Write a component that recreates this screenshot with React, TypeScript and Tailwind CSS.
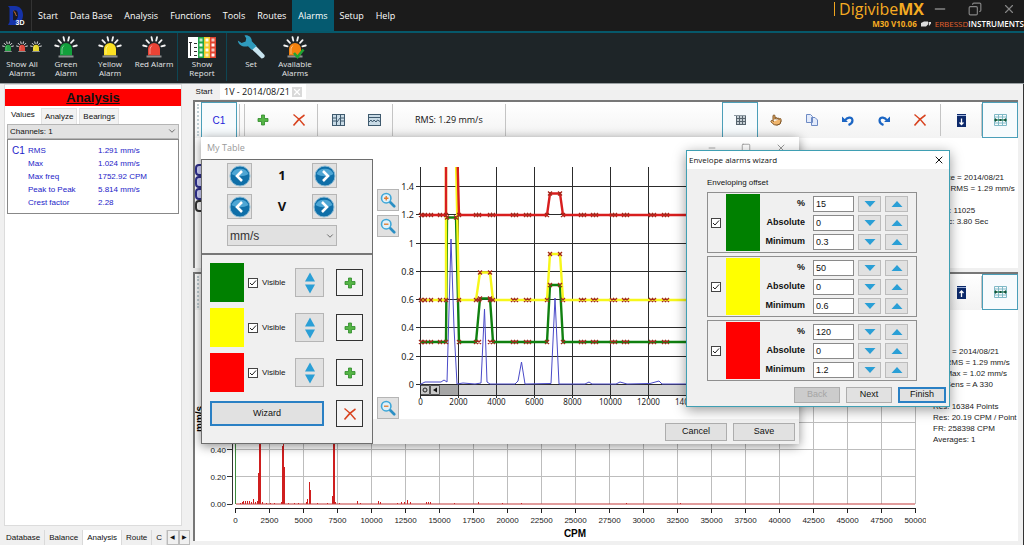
import type React from "react"
import { useState } from "react"
import { ChevronDown, Copy, Minus, Pointer, Square, X } from "lucide-react"
import clsx from "clsx"

const MENU = ["Start", "Data Base", "Analysis", "Functions", "Tools", "Routes", "Alarms", "Setup", "Help"]

const READINGS = [
  { name: "RMS", value: "1.291 mm/s" },
  { name: "Max", value: "1.024 mm/s" },
  { name: "Max freq", value: "1752.92 CPM" },
  { name: "Peak to Peak", value: "5.814 mm/s" },
  { name: "Crest factor", value: "2.28" },
]

const LEVELS = [
  { id: "green", swatch: "bg-[#008000]", percent: "15", absolute: "0", minimum: "0.3" },
  { id: "yellow", swatch: "bg-[#ffff00]", percent: "50", absolute: "0", minimum: "0.6" },
  { id: "red", swatch: "bg-[#ff0000]", percent: "120", absolute: "0", minimum: "1.2" },
]

/* ---------- icons ---------- */

function Lamp({ color, className, check }: { color: string; className?: string; check?: boolean }) {
  return (
    <svg viewBox="0 0 24 23" className={clsx("shrink-0", className)} aria-hidden="true">
      <g stroke="#f4f4f4" strokeWidth="1.8" strokeLinecap="round">
        <path d="M9.5 1.2l.8 3.4M15 1.2l-.8 3.4M4.4 4.2l2.6 2.6M19.6 4.2L17 6.8M1.2 9.5l3.4.8M22.8 9.5l-3.4.8" />
      </g>
      <path d="M6 19.5V13a6 6 0 0 1 12 0v6.500z" fill={color} />
      <path d="M8 18v-5a3.6 3.6 0 0 1 2.200-3.300" stroke="#fff" strokeOpacity=".45" fill="none" />
      <rect x="4.5" y="19.5" width="15" height="2" fill="#8c8f90" />
      {check && <path d="M11 17l3.500 4 6-7.500" fill="none" stroke="#1fa334" strokeWidth="2.6" />}
    </svg>
  )
}

function ReportIcon() {
  const cols = ["#1fa64a", "#f5c928", "#e2432f"]
  return (
    <svg viewBox="0 0 28 21" className="h-[21px] w-7" aria-hidden="true">
      <rect width="28" height="21" fill="#fff" />
      <path d="M1 5.500h3M2.500 5v14M6 6.500h3M6 10.500h3M6 14.500h3M6 18.500h3" stroke="#333" />
      {cols.map((c, i) => (
        <g key={c}>
          <rect x={10 + i * 6} y="0" width="6" height="21" fill={c} />
          {[0, 1, 2, 3].map((r) => (
            <rect key={r} x={11.5 + i * 6} y={1.5 + r * 5} width="3" height="3" fill="#fff" opacity={(i + r) % 2 ? 0.95 : 0.7} />
          ))}
        </g>
      ))}
    </svg>
  )
}

function WrenchIcon() {
  return (
    <svg viewBox="0 0 28 24" className="h-6 w-7" aria-hidden="true">
      <path d="M13.500 13l4-3.500 10 10.500c.8 2-1 3.500-3 3.500z" fill="#c8e4ef" />
      <path
        d="M7.500.5c4-.8 7.500 2 7.300 5.800L19.500 11l-4.500 4-4-3.800C6.500 12.500 1.500 10.500 .8 5.500l3.800 2.500 4-1.600.6-3.200z"
        fill="#2f9bbd"
      />
    </svg>
  )
}

function AppLogo() {
  return (
    <svg viewBox="0 0 18 21" className="h-[21px] w-[18px]" aria-hidden="true">
      <path d="M1 1h7c5 0 8 4 8 9s-3 10-8 10H1l1.500-3V3z" fill="#1532a8" />
      <path d="M6 6c3-2 5 0 5 4s-2 6-5 5z" fill="#1a1a24" />
      <path d="M6.500 6c2 1 1.500 3 3 5" stroke="#d9762c" fill="none" />
      <text x="8.5" y="19.5" fontSize="7" fontWeight="bold" fill="#fff" fontFamily="Liberation Sans, sans-serif">
        3D
      </text>
    </svg>
  )
}

function Plus() {
  return (
    <svg viewBox="0 0 12 12" className="size-3" aria-hidden="true">
      <path d="M4.500 1h3v3.500H11v3H7.500V11h-3V7.500H1v-3h3.500z" fill="#55b545" stroke="#2f8a2a" strokeWidth=".8" />
    </svg>
  )
}

function Cross() {
  return (
    <svg viewBox="0 0 14 14" className="size-3.5" aria-hidden="true">
      <path d="M1.500 1.500C5 4 9 8 12.500 12.500M12.500 2C8.500 4.500 4.500 8.500 1.500 12.500" stroke="#d8431f" strokeWidth="1.5" fill="none" />
    </svg>
  )
}

function TurnArrow({ redo }: { redo?: boolean }) {
  return (
    <svg viewBox="0 0 12 11" className={clsx("h-[11px] w-3", redo && "-scale-x-100")} aria-hidden="true">
      <path d="M0 1.500V7h6L4 5.200z" fill="#1c66c4" />
      <path d="M3 5.500C5 2 9.500 1.500 10.300 4.500c.6 2.500-1.300 4.500-3.800 5.500" fill="none" stroke="#1c66c4" strokeWidth="2.2" />
    </svg>
  )
}

function GridIcon() {
  return (
    <svg viewBox="0 0 12 12" className="size-3" aria-hidden="true">
      <path d="M2 2h10v9H2z" fill="#c4ced4" />
      <path d="M0 1.500h12" stroke="#8b98a1" />
      <path d="M2 4.500h10M2 7.500h10M2 10.500h10M2.500 2v9M5.500 2v9M8.500 2v9M11.500 2v9" stroke="#56646e" />
    </svg>
  )
}

function WaveIcon({ split }: { split?: boolean }) {
  return (
    <svg viewBox="0 0 13 12" className="h-3 w-[13px]" aria-hidden="true">
      <rect x=".5" y=".5" width="12" height="11" fill="#c9dbe6" stroke="#3f5a6e" />
      {split ? (
        <path d="M4.500 0v12M8.500 0v12M1 4h3M1 7h3M9 4h3M5 8l3-4M9 7h3" stroke="#3f5a6e" />
      ) : (
        <path d="M1 3.500h11M1 8l2-2 1.500 2L6 6l2 2 1.500-2L12 7.500" stroke="#3f5a6e" fill="none" />
      )}
    </svg>
  )
}

function BoxArrow({ up }: { up?: boolean }) {
  return (
    <svg viewBox="0 0 9 13" className="h-[13px] w-[9px]" aria-hidden="true">
      <rect width="9" height="13" fill="#0d2a6b" />
      <path d="M0 1.500h9" stroke="#9fb4dd" />
      <path d={up ? "M4.500 11V5M2.500 7l2-2 2 2" : "M4.500 4.500v6M2.500 8.500l2 2 2-2"} stroke="#fff" strokeWidth="1.3" fill="none" />
    </svg>
  )
}

function FitIcon() {
  return (
    <svg viewBox="0 0 13 12" className="h-3 w-[13px]" aria-hidden="true">
      <path d="M.5.500h12v11H.5zM.5 3h12M.5 9h12M4.500 0v12M8.500 0v12" fill="none" stroke="#7fb9c6" />
      <path d="M0 6h13" stroke="#1d7a4c" strokeWidth="1.2" />
      <path d="M1 4l2.500 2L1 8zM12 4L9.500 6 12 8zM5.500 5h2v2h-2z" fill="#124f3a" />
    </svg>
  )
}

function Triangle({ down }: { down?: boolean }) {
  return (
    <svg viewBox="0 0 12 8" className="h-2 w-3" aria-hidden="true">
      <path d={down ? "M.5 1h11L6 7z" : "M.5 7h11L6 1z"} fill="#2a9fd6" />
    </svg>
  )
}

function Magnifier({ sign }: { sign: "+" | "-" }) {
  return (
    <svg viewBox="0 0 18 18" className="size-4" aria-hidden="true">
      <path d="M11 11l5 5" stroke="#2b8fc4" strokeWidth="3" strokeLinecap="round" />
      <circle cx="7" cy="7" r="5.3" fill="#dff1fa" stroke="#3fa7d8" strokeWidth="1.8" />
      <path d={sign === "+" ? "M4.500 7h5M7 4.500v5" : "M4.500 7h5"} stroke="#e27a2e" strokeWidth="1.5" />
    </svg>
  )
}

function RoundArrow({ next }: { next?: boolean }) {
  return (
    <svg viewBox="0 0 22 22" className="size-[22px]" aria-hidden="true">
      <circle cx="11" cy="11" r="10" fill="#0f6fa8" stroke="#8cbcd6" />
      <path d="M2.500 9a9 8 0 0 1 17 0c-5 3-12 3-17 0z" fill="#4ea6d4" />
      <path d={next ? "M9 6l5 5-5 5" : "M13 6l-5 5 5 5"} fill="none" stroke="#fff" strokeWidth="2.6" />
    </svg>
  )
}

/* ---------- small controls ---------- */

function Tick({ label, hideLabel }: { label: string; hideLabel?: boolean }) {
  const [on, setOn] = useState(true)
  return (
    <label className="flex items-center gap-1 text-[8px]">
      <span className="relative flex size-2.5">
        <input
          type="checkbox"
          aria-label={label}
          checked={on}
          onChange={(e) => setOn(e.target.checked)}
          className="peer size-2.5 appearance-none border border-[#444] bg-white"
        />
        <svg viewBox="0 0 10 10" className="pointer-events-none absolute inset-0 hidden peer-checked:block">
          <path d="M2 5l2 2 4-4.500" fill="none" stroke="#222" />
        </svg>
      </span>
      {!hideLabel && label}
    </label>
  )
}

interface PushButtonProps {
  label: string
  className?: string
  disabled?: boolean
  primary?: boolean
}

function PushButton({ label, className, disabled, primary }: PushButtonProps) {
  return (
    <button
      type="button"
      disabled={disabled}
      className={clsx(
        "flex items-center justify-center text-[9px]",
        primary ? "border-2 border-[#2a80c4]" : "border border-[#adadad]",
        disabled ? "bg-[#cccccc] text-[#a5a5a5]" : "bg-[#e1e1e1]",
        className,
      )}
    >
      {label}
    </button>
  )
}

function IconButton({ label, className, children }: { label: string; className: string; children: React.ReactNode }) {
  return (
    <button type="button" aria-label={label} className={clsx("flex shrink-0 items-center justify-center", className)}>
      {children}
    </button>
  )
}

const TOOL = "h-9 w-9"
const TOOL_ON = "h-9 w-9 border border-[#4b9fb9] bg-[#f7fbfd]"

/* ---------- header ---------- */

function TitleBar() {
  return (
    <header className="flex h-[33px] border-b-2 border-[#06586a] bg-[#1b1b1b] text-white">
      <div className="flex w-8 items-center justify-center border-r border-[#333]">
        <AppLogo />
      </div>
      <nav className="flex font-['Open_Sans',sans-serif] text-[9px]">
        {MENU.map((item) => (
          <a
            key={item}
            href="#"
            className={clsx("flex items-center px-[6px]", item === "Alarms" && "bg-[#055a70]")}
          >
            {item}
          </a>
        ))}
      </nav>
      <div className="ml-auto flex flex-col font-['Open_Sans',sans-serif]">
        <div className="flex h-[18px] items-center justify-end">
          <span className="mr-1 h-3.5 border-l border-[#f0a51e]" />
          <span className="text-[16px] leading-4 text-[#f5ab22]">
            Digivibe<b>MX</b>
          </span>
          <div className="ml-2 flex items-center gap-5 pr-2 text-[#858585]">
            <button type="button" aria-label="Minimize">
              <Minus className="size-4" strokeWidth={2} />
            </button>
            <button type="button" aria-label="Restore">
              <Copy className="size-3.5 -scale-x-100" strokeWidth={2} />
            </button>
            <button type="button" aria-label="Close">
              <X className="size-3.5" strokeWidth={2} />
            </button>
          </div>
        </div>
        <div className="flex items-center justify-end gap-1 pt-px text-[8px] leading-[10px]">
          <b className="text-[#f5ab22]">M30 V10.06</b>
          <svg viewBox="0 0 10 6" className="h-1.5 w-2.5" aria-hidden="true">
            <path d="M0 2l3-1.500h4v3L5 5.500H0zM7.500 1H10v1.500L8 5" fill="#ddd" />
          </svg>
          <span className="text-[#e0602c]">
            ERBESSD<span className="font-semibold text-white">INSTRUMENTS</span>
          </span>
        </div>
      </div>
    </header>
  )
}

function RibbonButton({ icon, label }: { icon: React.ReactNode; label: string }) {
  return (
    <button type="button" className="flex w-11 flex-col items-center px-0.5 pt-0.5">
      <span className="flex h-6 items-center justify-center">{icon}</span>
      <span className="text-[8px] leading-[9px]">{label}</span>
    </button>
  )
}

function Ribbon() {
  return (
    <div className="flex h-[51px] items-start border-b border-[#9aa0a2] bg-[#1e2528] font-['Open_Sans',sans-serif] text-[#e4e6e7]">
      <RibbonButton
        label="Show All Alarms"
        icon={
          <span className="flex gap-0.5">
            <Lamp color="#25a244" className="size-3" />
            <Lamp color="#e0483c" className="size-3" />
            <Lamp color="#e6d62c" className="size-3" />
          </span>
        }
      />
      <RibbonButton label="Green Alarm" icon={<Lamp color="#12a03c" className="h-[23px] w-6" />} />
      <RibbonButton label="Yellow Alarm" icon={<Lamp color="#fbe122" className="h-[23px] w-6" />} />
      <RibbonButton label="Red Alarm" icon={<Lamp color="#ea4335" className="h-[23px] w-6" />} />
      <div className="mr-0.5 ml-px h-12 w-px bg-[#0e4654]" />
      <RibbonButton label="Show Report" icon={<ReportIcon />} />
      <div className="mx-0.5 h-12 w-px bg-[#0e4654]" />
      <RibbonButton label="Set" icon={<WrenchIcon />} />
      <RibbonButton label="Available Alarms" icon={<Lamp color="#f5820d" className="h-[23px] w-6" check />} />
    </div>
  )
}

/* ---------- left panel ---------- */

function AnalysisPanel() {
  return (
    <aside className="flex w-[190px] shrink-0 flex-col">
      <div className="mr-2 mb-1 ml-1 flex flex-1 flex-col border border-[#dcdcdc] bg-white pt-1 pb-1">
        <h2 className="bg-[#ff0000] text-center text-[13px] leading-[17px] font-bold underline">Analysis</h2>
        <div className="flex items-end gap-0.5 px-0.5 text-[8px]">
          <button type="button" className="h-[18px] px-1">Values</button>
          <button type="button" className="h-4 border border-b-0 border-[#e2e2e2] bg-[#f2f2f2] px-[3px]">Analyze</button>
          <button type="button" className="h-4 border border-b-0 border-[#e2e2e2] bg-[#f2f2f2] px-[3px]">Bearings</button>
        </div>
        <div className="relative mx-0.5 flex">
          <select
            aria-label="Channels"
            className="h-[15px] w-full appearance-none border border-[#b5b5b5] bg-[#e2e2e2] px-0.5 text-[8px] leading-[13px]"
          >
            <option>Channels: 1</option>
          </select>
          <ChevronDown className="pointer-events-none absolute top-0.5 right-0.5 size-2.5 text-[#555]" />
        </div>
        <table className="mx-0.5 border-separate border-spacing-0 border border-[#888] pt-1 pb-1 text-left text-[8px] leading-[13px] text-[#2323c8]">
          <tbody>
            {READINGS.map((r, i) => (
              <tr key={r.name}>
                <td className="w-5 pl-1 text-[10px]">{i === 0 && "C1"}</td>
                <th className="w-[70px] font-normal">{r.name}</th>
                <td>{r.value}</td>
              </tr>
            ))}
          </tbody>
        </table>
      </div>
      <div className="flex h-[15px] items-stretch pl-0.5 text-[8px]">
        {["Database", "Balance", "Analysis", "Route", "C"].map((t) => (
          <button key={t} type="button" className={clsx("border-r border-[#dadada] px-1", t === "Analysis" && "bg-white")}>
            {t}
          </button>
        ))}
        <button type="button" aria-label="Scroll left" className="w-3 border border-[#bbb] text-[6px]">◀</button>
        <button type="button" aria-label="Scroll right" className="w-3 border border-[#bbb] text-[6px]">▶</button>
      </div>
    </aside>
  )
}

/* ---------- measurement area ---------- */

function Separator() {
  return <div className="h-8 w-px shrink-0 bg-[#c4c4c4]" />
}

function MainToolbar() {
  return (
    <div className="flex h-9 items-center bg-linear-to-b from-white to-[#f3f3f3] pl-0.5">
      <div className="mr-0.5 h-8 border-l-2 border-dotted border-[#bfcdd2]" />
      <button type="button" className={clsx(TOOL_ON, "text-[10px] text-[#2323d8]")}>C1</button>
      <div className="ml-0.5 flex gap-1">
        <Separator />
        <Separator />
      </div>
      <IconButton label="Add" className={TOOL}><Plus /></IconButton>
      <IconButton label="Remove" className={TOOL}><Cross /></IconButton>
      <Separator />
      <IconButton label="Split view" className={clsx(TOOL, "ml-0.5")}><WaveIcon split /></IconButton>
      <IconButton label="Wave view" className={TOOL}><WaveIcon /></IconButton>
      <Separator />
      <span className="px-[22px] font-['Open_Sans',sans-serif] text-[9px] whitespace-nowrap">RMS: 1.29 mm/s</span>
      <Separator />
      <div className="ml-auto flex items-center">
        <IconButton label="Grid" className={TOOL_ON}><GridIcon /></IconButton>
        <IconButton label="Point" className={TOOL}><Pointer className="size-3 fill-[#f0b56c] text-[#7d5426]" /></IconButton>
        <IconButton label="Copy" className={TOOL}>
          <svg viewBox="0 0 12 12" className="size-3" aria-hidden="true">
            <path d="M.5.500h4l2 2v6h-6zM5.500 3.500h3.500l2.500 2.500v5.500h-6z" fill="#e3ebfb" stroke="#6e8bc4" />
          </svg>
        </IconButton>
        <IconButton label="Undo" className={TOOL}><TurnArrow /></IconButton>
        <IconButton label="Redo" className={TOOL}><TurnArrow redo /></IconButton>
        <IconButton label="Delete" className={TOOL}><Cross /></IconButton>
        <div className="ml-0.5 flex items-center">
          <Separator />
          <IconButton label="Dock down" className="h-9 w-10"><BoxArrow /></IconButton>
          <Separator />
        </div>
        <IconButton label="Fit" className={TOOL_ON}><FitIcon /></IconButton>
      </div>
    </div>
  )
}

const BIG_TICKS = Array.from({ length: 21 }, (_, i) => i)

// x position and height of every line in the spectrum
const LINES = [
  [240, 1], [242, 2], [243, 3], [245, 3], [247, 3], [249, 3], [251, 2], [253, 5], [255, 2], [257, 3],
  [258, 31], [259, 190], [260, 190], [262, 2], [266, 1], [270, 1], [274, 1], [281, 2], [282, 58], [283, 190], [284, 37],
  [288, 1], [294, 1], [298, 1], [306, 2], [307, 5], [309, 22], [310, 14], [317, 1], [327, 1],
  [332, 8], [333, 190], [334, 190], [335, 2], [339, 1], [357, 3], [360, 1], [378, 3], [380, 2], [397, 1], [401, 2],
  [404, 2], [407, 4], [410, 2], [426, 2], [428, 2], [430, 2], [454, 1], [478, 2], [502, 1], [521, 1],
  [626, 1], [680, 1],
]
const SPECTRUM = LINES.map(([x, h]) => `M${x + 0.5} 504v-${h}`).join("")

function SpectrumChart() {
  return (
    <svg viewBox="195 310 731 231" className="h-auto min-w-0 flex-1" fontFamily="Liberation Sans, sans-serif" fontSize="8" aria-hidden="true">
      <g stroke="#bdbdbd">
        {BIG_TICKS.map((i) => (
          <path key={i} d={`M${235.5 + i * 34} 312V504`} />
        ))}
        {[340.5, 367.5, 395.5, 422.5, 449.5, 476.5].map((y) => (
          <path key={y} d={`M236 ${y}H915`} />
        ))}
      </g>
      <path d="M235.500 312V504" stroke="#3c8a3c" />
      <path d="M232.500 312V504.500M227 504.500h5M227 476.500h5M227 449.500h5" stroke="#333" fill="none" />
      <path d={SPECTRUM} stroke="#cf1f1f" fill="none" />
      <path d="M236 504H915" stroke="#c23a3a" />
      <path d="M235 508.500H915" stroke="#222" />
      {BIG_TICKS.map((i) => (
        <g key={i}>
          <path d={`M${235.5 + i * 34} 508v5`} stroke="#222" />
          <text x={235.5 + i * 34} y="523" textAnchor="middle" fill="#222">{i * 2500}</text>
        </g>
      ))}
      {["0.00", "0.20", "0.40"].map((v, i) => (
        <text key={v} x="226" y={507 - i * 27} textAnchor="end" fill="#222">{v}</text>
      ))}
      <text x="575" y="537" textAnchor="middle" fontWeight="bold" fontSize="10">CPM</text>
      <text transform="translate(203 432) rotate(-90)" fontWeight="bold" fontSize="10">mm/s</text>
    </svg>
  )
}

function Workspace() {
  return (
    <main className="flex min-w-0 flex-1 flex-col pb-1">
      <div className="flex h-[15px] items-end pl-0.5 text-[9px]">
        <button type="button" className="h-3.5 w-6 text-[8px]">Start</button>
        <div className="ml-1 flex h-[15px] items-center gap-0.5 bg-white px-1">
          <button type="button" className="font-['Open_Sans',sans-serif]">1V - 2014/08/21</button>
          <button type="button" aria-label="Close tab" className="bg-[#d9d9d9] text-white">
            <X className="size-2.5" strokeWidth={3} />
          </button>
        </div>
      </div>
      <section className="mt-px mr-[5px] ml-[3px] h-[168px] border-t-2 border-l-2 border-[#777] bg-white">
        <MainToolbar />
        <div className="flex justify-between pt-[26px]">
          <div className="flex w-3 flex-col">
            {["A", "B", "C", "D"].map((c) => (
              <button
                key={c}
                type="button"
                aria-label={`Cursor ${c}`}
                className="h-3 w-3 rounded border-2 border-[#2d2d8c] bg-[#d4d6ff] last:border-[#333] last:bg-white"
              />
            ))}
          </div>
          <p className="w-20 pt-2 text-[8px] leading-[11px] whitespace-nowrap text-[#222]">
            Date = 2014/08/21<br />C1 RMS = 1.29 mm/s<br /><br />SR: 11025<br />Rec: 3.80 Sec
          </p>
        </div>
      </section>
      <section className="mt-1 mr-[5px] ml-[3px] flex-1 border-t-2 border-l-2 border-[#777] bg-white">
        <div className="flex h-9 items-center justify-end bg-linear-to-b from-white to-[#f3f3f3]">
          <div className="mr-auto ml-0.5 h-8 border-l-2 border-dotted border-[#bfcdd2]" />
          <Separator />
          <IconButton label="Dock up" className="h-9 w-10"><BoxArrow up /></IconButton>
          <Separator />
          <IconButton label="Fit" className={TOOL_ON}><FitIcon /></IconButton>
        </div>
        <div className="flex items-start">
          <SpectrumChart />
          <p className="w-[92px] shrink-0 pt-9 pl-[7px] text-[8px] leading-[11px] whitespace-nowrap text-[#222]">
            Date = 2014/08/21<br />C1 RMS = 1.29 mm/s<br />C1 Max = 1.02 mm/s<br />C1 Sens = A 330<br /><br />
            Res: 16384 Points<br />Res: 20.19 CPM / Point<br />FR: 258398 CPM<br />Averages: 1
          </p>
        </div>
      </section>
    </main>
  )
}

/* ---------- alarm table window ---------- */

const ENVELOPES = [
  { color: "#108010", base: 342, d: "M420 342H446L447 217.500H456L459 342H476L480 298.500H490L493 342H547L550 285H560L563 342H799" },
  { color: "#f7f71a", base: 300, d: "M420 300H446V160M456 160L459 300H476L480 272.500H490L493 300H547L550 254H560L563 300H799" },
  { color: "#d81e1e", base: 215, d: "M420 215H446V160M457.500 160L459 215H547L550 193.500H560L563 215H799" },
]

const MARKS = [421, 425, 431, 440, 446, 459, 476, 479, 490, 493, 513, 516, 526, 529, 547, 563, 581, 584, 593, 596, 612, 615, 624, 627, 651, 654, 664, 667]
const PEAKS = [
  [447, 217.5], [456, 217.5], [480, 298.5], [490, 298.5], [550, 285], [560, 285],
  [480, 272.5], [490, 272.5], [550, 254], [560, 254], [550, 193.5], [560, 193.5],
]
const SIGNAL =
  "M420 384.500L425 382H441L444 380L447 382L451 239L454 328L457 384L463 383L475 384L481 383L484.500 309L487 382L490 384H515L518 381L521.500 362L525 384L551 383.500L555 298L559 384H585L589 382L592 384H616L620 382L627 384L650 383.500L659 381L662 384H690"

function mark(x: number, y: number) {
  return `M${x - 2} ${y - 2}l4 4M${x + 2} ${y - 2}l-4 4`
}

function EnvelopeChart() {
  return (
    <svg viewBox="399 159 400 260" className="h-auto min-w-0 flex-1" fontFamily="Noto Sans, sans-serif" aria-hidden="true">
      <clipPath id="plot">
        <path d="M416 167H799V396H416z" />
      </clipPath>
      <rect x="420" y="385" width="379" height="10" fill="#d5d5d5" />
      <rect x="420" y="385" width="38" height="10" fill="#a5a5a5" />
      <path d="M420.500 385.500h9v9h-9zM430.500 385.500h9v9h-9z" fill="#c8c8c8" stroke="#555" />
      <circle cx="425" cy="390" r="2" fill="none" stroke="#222" />
      <path d="M433 390l4-2.500v5z" fill="#111" />
      <g stroke="#2c2c2c">
        {[0, 1, 2, 3, 4, 5, 6, 7, 8, 9].map((i) => (
          <path key={i} d={`M${420.5 + i * 38} 167V398`} />
        ))}
        {[0, 1, 2, 3, 4, 5, 6, 7].map((i) => (
          <path key={i} d={`M416 ${Math.round(384 - i * 28.3) + 0.5}H799`} />
        ))}
        <path d="M420 395.500H799" />
      </g>
      <g clipPath="url(#plot)" fill="none">
        <path d={SIGNAL} stroke="#4a4ac8" />
        {ENVELOPES.map((e) => (
          <path key={e.color} d={e.d} stroke={e.color} strokeWidth="2.4" />
        ))}
        <path
          d={ENVELOPES.map((e) => MARKS.map((x) => mark(x, e.base)).join("")).join("") + PEAKS.map(([x, y]) => mark(x, y)).join("")}
          stroke="#a3281c"
          strokeWidth="1.3"
        />
      </g>
      {["0", "0.2", "0.4", "0.6", "0.8", "1", "1.2", "1.4"].map((v, i) => (
        <text key={v} x="414" y={388 - i * 28.3} textAnchor="end" fontSize="9" fill="#222">{v}</text>
      ))}
      {[0, 1, 2, 3, 4, 5, 6, 7, 8, 9].map((i) => (
        <text key={i} x={420.5 + i * 38} y="405" textAnchor="middle" fontSize="8" fill="#222">{i * 2000}</text>
      ))}
    </svg>
  )
}

function Stepper({ value, name }: { value: string; name: string }) {
  return (
    <div className="flex items-center justify-between">
      <IconButton label={`Previous ${name}`} className="size-[25px] border border-[#b5b5b5] bg-[#e1e1e1]">
        <RoundArrow />
      </IconButton>
      <b className="font-['Open_Sans',sans-serif] text-[13px]">{value}</b>
      <IconButton label={`Next ${name}`} className="size-[25px] border border-[#b5b5b5] bg-[#e1e1e1]">
        <RoundArrow next />
      </IconButton>
    </div>
  )
}

const ZOOM_BUTTON = "size-[22px] border border-[#b5b5b5] bg-[#e1e1e1]"

function TableWindow() {
  return (
    <div className="absolute top-[53px] left-[201px] flex w-[598px] flex-col bg-[#f0f0f0] shadow-[0_2px_10px_rgba(0,0,0,0.45)]">
      <div className="flex h-[22px] items-center bg-white pl-1.5 text-[#9a9a9a]">
        <h2 className="mr-auto font-['Open_Sans',sans-serif] text-[9px]">My Table</h2>
        <div className="flex items-center gap-6 pr-3">
          <button type="button" aria-label="Minimize"><Minus className="size-2.5" /></button>
          <button type="button" aria-label="Maximize"><Square className="size-2.5" /></button>
          <button type="button" aria-label="Close"><X className="size-3" /></button>
        </div>
      </div>
      <div className="flex">
        <div className="w-[172px] shrink-0 border border-[#6e6e6e]">
          <div className="flex h-[95px] flex-col gap-1.5 border-b-2 border-[#777] pt-[3px] pr-[35px] pl-[25px]">
            <Stepper value="1" name="point" />
            <Stepper value="V" name="axis" />
            <div className="relative flex">
              <select
                aria-label="Units"
                className="h-[21px] w-full appearance-none border border-[#b5b5b5] bg-[#e1e1e1] px-0.5 text-[12px] leading-[18px] text-[#333]"
              >
                <option>mm/s</option>
              </select>
              <ChevronDown className="pointer-events-none absolute top-1.5 right-0.5 size-2.5 text-[#555]" />
            </div>
          </div>
          <div className="flex flex-col gap-1.5 pt-2 pr-[9px] pb-4 pl-2">
            {LEVELS.map((l) => (
              <div key={l.id} className="flex h-[39px] items-center">
                <div className={clsx("mr-1 h-[39px] w-[34px]", l.swatch)} />
                <Tick label="Visible" />
                <IconButton label={`Move ${l.id} limit`} className="ml-auto h-[29px] w-[29px] border border-[#b5b5b5] bg-[#e1e1e1]">
                  <svg viewBox="0 0 12 22" className="h-[22px] w-3" aria-hidden="true">
                    <path d="M1 9.500L6 .5l5 9zM1 12.500l5 9 5-9z" fill="#2a9fd6" />
                  </svg>
                </IconButton>
                <IconButton label={`Add ${l.id} point`} className="ml-3 size-[27px] border border-[#333] bg-[#f4f4f4]">
                  <Plus />
                </IconButton>
              </div>
            ))}
            <div className="mt-0.5 flex items-center justify-between">
              <PushButton label="Wizard" primary className="h-[25px] w-[114px]" />
              <IconButton label="Remove point" className="size-[27px] border border-[#333] bg-[#f4f4f4]">
                <Cross />
              </IconButton>
            </div>
          </div>
        </div>
        <div className="flex min-w-0 flex-1 flex-col">
          <div className="flex bg-white">
            <div className="flex w-[26px] shrink-0 flex-col gap-1 pt-[30px] pl-1">
              <IconButton label="Zoom in" className={ZOOM_BUTTON}><Magnifier sign="+" /></IconButton>
              <IconButton label="Zoom out" className={ZOOM_BUTTON}><Magnifier sign="-" /></IconButton>
              <IconButton label="Zoom out horizontally" className={clsx(ZOOM_BUTTON, "mt-auto")}><Magnifier sign="-" /></IconButton>
            </div>
            <EnvelopeChart />
          </div>
          <div className="flex justify-end gap-1.5 pt-1 pr-1">
            <PushButton label="Cancel" className="h-[18px] w-[62px]" />
            <PushButton label="Save" className="h-[18px] w-[62px]" />
          </div>
        </div>
      </div>
    </div>
  )
}

/* ---------- wizard window ---------- */

function OffsetRow({ level, label, initial }: { level: string; label: string; initial: string }) {
  const [value, setValue] = useState(initial)
  const id = `${level}-${label}`
  const step = (n: number) => setValue(String(Math.round((Number(value) + n) * 10) / 10))
  const arrow = "flex h-4 w-[23px] items-center justify-center border border-[#bcbcbc] bg-[#e1e1e1]"

  return (
    <div className="flex items-center gap-1">
      <label htmlFor={id} className="mr-1 flex-1 text-right text-[9px] font-bold">{label}</label>
      <input
        id={id}
        value={value}
        onChange={(e) => setValue(e.target.value)}
        className="h-4 w-[41px] border border-[#8a8a8a] bg-white px-0.5 text-[9px]"
      />
      <button type="button" aria-label={`Decrease ${id}`} className={arrow} onClick={() => step(-1)}><Triangle down /></button>
      <button type="button" aria-label={`Increase ${id}`} className={arrow} onClick={() => step(1)}><Triangle /></button>
    </div>
  )
}

function WizardWindow() {
  return (
    <div className="absolute top-[66px] left-[686px] w-[264px] border border-[#3f9fb3] bg-[#f0f0f0] pb-[3px] shadow-[0_3px_12px_rgba(0,0,0,0.4)]">
      <div className="flex h-[18px] items-center justify-between bg-white pr-1 pl-0.5">
        <h2 className="font-['Open_Sans',sans-serif] text-[8px]">Envelope alarms wizard</h2>
        <button type="button" aria-label="Close wizard"><X className="size-3" strokeWidth={2} /></button>
      </div>
      <div className="flex flex-col gap-[3px] pt-2 pr-8 pl-5">
        <p className="text-[8px] leading-3">Enveloping offset</p>
        {LEVELS.map((l) => (
          <div key={l.id} className="flex h-[61px] items-center border border-[#8f8f8f] pr-2 pl-[3px]">
            <Tick label={`Use ${l.id} level`} hideLabel />
            <div className={clsx("ml-[5px] h-[57px] w-[34px]", l.swatch)} />
            <div className="flex flex-1 flex-col gap-[3px]">
              <OffsetRow level={l.id} label="%" initial={l.percent} />
              <OffsetRow level={l.id} label="Absolute" initial={l.absolute} />
              <OffsetRow level={l.id} label="Minimum" initial={l.minimum} />
            </div>
          </div>
        ))}
      </div>
      <div className="flex justify-end gap-1.5 pt-1.5 pr-[3px]">
        <PushButton label="Back" disabled className="h-4 w-[46px]" />
        <PushButton label="Next" className="h-4 w-[46px]" />
        <PushButton label="Finish" primary className="h-4 w-12" />
      </div>
    </div>
  )
}

export default function App() {
  return (
    <div className="flex min-h-screen flex-col bg-[#f0f0f0] font-['Liberation_Sans',Arial,sans-serif] text-[#111]">
      <TitleBar />
      <Ribbon />
      <div className="relative flex flex-1 border-r border-[#333]">
        <AnalysisPanel />
        <Workspace />
        <TableWindow />
        <WizardWindow />
      </div>
    </div>
  )
}
